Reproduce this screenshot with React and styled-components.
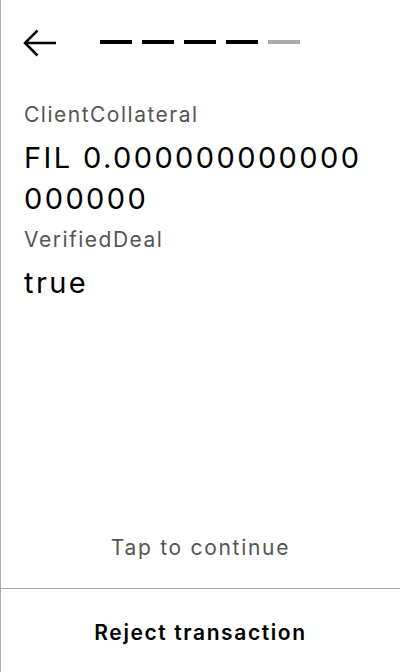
import styled, { createGlobalStyle } from 'styled-components'

const Global = createGlobalStyle`
    html, body {
        margin: 0;
        padding: 0;
        background: #fff;
    }
    body {
        font-family: Inter, "Noto Sans", sans-serif;
        color: #000;
    }
`;

const Screen = styled.div`
    width: 400px;
    height: 672px;
    box-sizing: border-box;
    border-left: 1px solid #aaa;
    display: flex;
    flex-direction: column;
    background: #fff;
`;

const Header = styled.div`
    display: flex;
    align-items: center;
    gap: 43px;
    padding: 28px 0 0 22px;
    height: 30px;
`;

const BackButton = styled.button`
    border: none;
    background: transparent;
    padding: 0;
    width: 34px;
    height: 30px;
    display: flex;
    cursor: pointer;
`;

const Steps = styled.div`
    display: flex;
    gap: 10px;
    margin-top: -2px;
`;

const Step = styled.span`
    width: 32px;
    height: 4px;
    background: ${p => p.$done ? '#000' : '#aaa'};
`;

const Content = styled.div`
    flex: 1;
    padding: 45px 24px 0 23px;
    display: flex;
    flex-direction: column;
`;

const Label = styled.div`
    font-size: 21px;
    line-height: 24px;
    letter-spacing: 1.5px;
    color: #555;
    margin-bottom: 10px;
`;

const Value = styled.div`
    font-size: 29px;
    line-height: 41px;
    letter-spacing: 2.4px;
    color: #000;
    word-break: break-all;
    margin-bottom: 9px;
`;

const Hint = styled.div`
    text-align: center;
    font-size: 21px;
    line-height: 24px;
    letter-spacing: 1.7px;
    color: #555;
    padding-bottom: 28px;
`;

const Footer = styled.div`
    border-top: 1px solid #aaa;
    height: 83px;
    display: flex;
`;

const RejectButton = styled.button`
    flex: 1;
    border: none;
    background: transparent;
    font-family: Inter, "Noto Sans", sans-serif;
    font-size: 21px;
    font-weight: 600;
    letter-spacing: 1.6px;
    color: #000;
    padding: 4px 0 0 0;
    cursor: pointer;
`;

function BackArrow(){
    return(
        <svg width="34" height="30" viewBox="0 0 34 30" fill="none">
            <path d="M14.5 2.5 L2 15 L14.5 27.5 M2 15 H33" stroke="#000" strokeWidth="2.5" />
        </svg>
    )
}

const fields = [
    { label: 'ClientCollateral', value: 'FIL 0.000000000000000000' },
    { label: 'VerifiedDeal', value: 'true' },
];

function App(){
    return(
        <Screen>
            <Global />
            <Header>
                <BackButton aria-label="Back"><BackArrow /></BackButton>
                <Steps>
                    {[true, true, true, true, false].map((d, i) => <Step key={i} $done={d} />)}
                </Steps>
            </Header>
            <Content>
                {fields.map(f => (
                    <div key={f.label}>
                        <Label>{f.label}</Label>
                        <Value>{f.value}</Value>
                    </div>
                ))}
            </Content>
            <Hint>Tap to continue</Hint>
            <Footer>
                <RejectButton>Reject transaction</RejectButton>
            </Footer>
        </Screen>
    )
}

export default App;
